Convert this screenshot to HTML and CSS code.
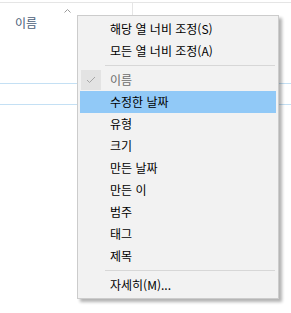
FILE: index.html
```html
<!DOCTYPE html>
<html lang="ko">
<head>
    <meta charset="UTF-8">
    <title>열 선택</title>
    <link rel="stylesheet" href="styles.css">
</head>
<body>

<!-- File list behind the menu -->
<div class="list">
    <div class="header">
        <div class="col col-name">
            <svg class="sort" width="7" height="4" viewBox="0 0 7 4">
                <polyline points="0.5,3.5 3.5,0.5 6.5,3.5" fill="none" stroke="#9a9a9a" stroke-width="1"/>
            </svg>
            <span class="label">이름</span>
        </div>
        <div class="col"></div>
    </div>
    <div class="row"></div>
</div>

<!-- Column context menu -->
<div class="menu">
    <div class="item"><span class="icon"></span><span>해당 열 너비 조정(S)</span></div>
    <div class="item"><span class="icon"></span><span>모든 열 너비 조정(A)</span></div>
    <div class="sep"></div>
    <div class="item disabled">
        <span class="icon checked">
            <svg width="10" height="8" viewBox="0 0 10 8">
                <polyline points="1,4 3.5,6.5 9,1" fill="none" stroke="#a6a6a6" stroke-width="1"/>
            </svg>
        </span>
        <span>이름</span>
    </div>
    <div class="item hover"><span class="icon"></span><span>수정한 날짜</span></div>
    <div class="item"><span class="icon"></span><span>유형</span></div>
    <div class="item"><span class="icon"></span><span>크기</span></div>
    <div class="item"><span class="icon"></span><span>만든 날짜</span></div>
    <div class="item"><span class="icon"></span><span>만든 이</span></div>
    <div class="item"><span class="icon"></span><span>범주</span></div>
    <div class="item"><span class="icon"></span><span>태그</span></div>
    <div class="item"><span class="icon"></span><span>제목</span></div>
    <div class="sep"></div>
    <div class="item"><span class="icon"></span><span>자세히(M)...</span></div>
</div>

</body>
</html>
```

FILE: styles.css
```css
body {
    margin: 0;
    background: #fff;
    font-family: "Noto Sans CJK KR", "Noto Sans", sans-serif;
    font-size: 12px;
    color: #000;
    width: 291px;
    height: 313px;
    overflow: hidden;
}

.list {
    width: 291px;
}

.header {
    margin-top: 2px;
    border-top: 1px solid #e5e5e5;
    height: 34px;
    display: flex;
}

.col {
    flex: 1;
}

.col-name {
    flex: none;
    width: 132px;
    border-right: 1px solid #e5e5e5;
    display: flex;
    flex-direction: column;
}

.sort {
    align-self: center;
    margin-top: 6px;
    margin-left: 2px;
}

.label {
    margin-top: 2px;
    padding-left: 15px;
    line-height: 16px;
    color: #4c607a;
}

.row {
    margin-top: 46px;
    height: 20px;
    border-top: 1px solid #c4e0f4;
    border-bottom: 1px solid #c4e0f4;
}

.menu {
    position: absolute;
    left: 77px;
    top: 15px;
    width: 202px;
    box-sizing: border-box;
    background: #f2f2f2;
    border: 1px solid #cccccc;
    padding: 2px;
    box-shadow: 3px 3px 3px rgba(0, 0, 0, 0.3);
}

.item {
    display: flex;
    align-items: center;
    height: 22px;
    line-height: 22px;
    white-space: nowrap;
}

.icon {
    width: 20px;
    height: 20px;
    margin: 1px 9px 1px 1px;
    display: flex;
    align-items: center;
    justify-content: center;
}

.icon.checked {
    background: #e3e3e3;
}

.item.disabled {
    color: #6d6d6d;
}

.item.hover {
    background: #91c9f7;
}

.sep {
    height: 1px;
    background: #d7d7d7;
    margin: 3px 1px 3px 25px;
}
```
